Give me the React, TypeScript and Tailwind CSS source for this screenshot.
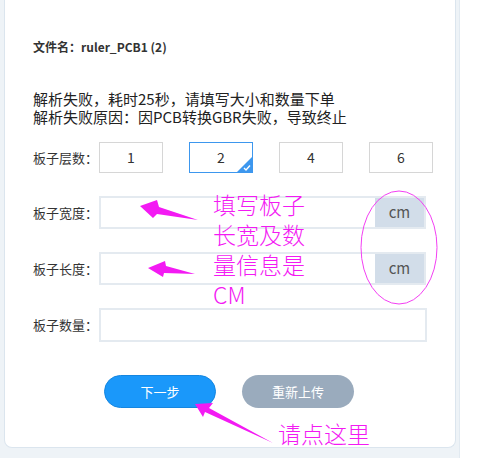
import React from "react"

const font = { fontFamily: '"Noto Sans CJK SC", "Noto Sans", sans-serif' }

function LayerBox({ value, selected }: { value: string; selected?: boolean }) {
  return (
    <div
      className={
        "relative flex h-[31px] w-[64px] items-center justify-center overflow-hidden text-[14px] text-[#333] " +
        (selected ? "border border-[#3d97ee]" : "border border-[#d6d6d6]")
      }
    >
      {value}
      {selected && (
        <svg className="absolute bottom-0 right-0" width="15" height="15" viewBox="0 0 15 15">
          <path d="M15 0 L15 15 L0 15 Z" fill="#3d97ee" />
          <path d="M7 11 L9 13 L13 8.5" stroke="#fff" strokeWidth="1.4" fill="none" />
        </svg>
      )}
    </div>
  )
}

function Row({ label, children }: { label: string; children: React.ReactNode }) {
  return (
    <div className="flex items-center">
      <div className="w-[66px] shrink-0 text-[13px] text-[#333]">{label}</div>
      {children}
    </div>
  )
}

function SizeInput() {
  return (
    <div className="flex h-[33px] w-[327px] border-2 border-[#e4eaf0]">
      <div className="flex-1 bg-white" />
      <div className="flex w-[49px] items-center justify-center bg-[#d2dde9] text-[15px] text-[#555]">cm</div>
    </div>
  )
}

export default function App() {
  return (
    <div className="h-[458px] w-[504px] bg-white" style={font}>
      <div className="w-[460px] border-r border-[#e2eaf1] bg-[#eef3f7] pb-[10px]">
        <div className="relative ml-1 w-[452px] rounded-b-[8px] border-x border-b border-[#dbe5ee] bg-white pb-[39px] pl-[28px] pt-[39px]">
          <div className="text-[12px] font-bold leading-[16px] text-[#333]">文件名：ruler_PCB1 (2)</div>

          <div className="mt-[35px] text-[15px] leading-[18px] text-[#222]">
            <div>解析失败，耗时25秒，请填写大小和数量下单</div>
            <div>解析失败原因：因PCB转换GBR失败，导致终止</div>
          </div>

          <div className="mt-[16px]">
            <Row label="板子层数：">
              <div className="flex gap-[26px]">
                <LayerBox value="1" />
                <LayerBox value="2" selected />
                <LayerBox value="4" />
                <LayerBox value="6" />
              </div>
            </Row>
          </div>

          <div className="mt-[23px]">
            <Row label="板子宽度：">
              <SizeInput />
            </Row>
          </div>

          <div className="mt-[23px]">
            <Row label="板子长度：">
              <SizeInput />
            </Row>
          </div>

          <div className="mt-[23px]">
            <Row label="板子数量：">
              <div className="h-[34px] w-[328px] border-2 border-[#e4eaf0] bg-white" />
            </Row>
          </div>

          <div className="mt-[33px] flex gap-[26px] pl-[71px]">
            <button className="h-[33px] w-[112px] rounded-full border border-[#1586e0] bg-[#1a98fa] text-[13px] text-white">
              下一步
            </button>
            <button className="h-[33px] w-[112px] rounded-full bg-[#9aabbd] text-[13px] text-white">
              重新上传
            </button>
          </div>

          {/* annotations drawn over the form */}
          <svg className="pointer-events-none absolute left-[-5px] top-0" width="460" height="458">
            <polygon points="140,206 157,200 159,207 198,220 157,214 153,218" fill="#f31af3" />
            <polygon points="148,268 165,261 166,266 195,274 164,273 163,277" fill="#f31af3" />
            <polygon points="195,404 213,403 209,408 273,443 205,412 203,417" fill="#f31af3" />
            <ellipse cx="399" cy="247.5" rx="38" ry="56.5" fill="none" stroke="#f33ff3" strokeWidth="1" />
          </svg>
          <div className="pointer-events-none absolute left-[208px] top-[189px] text-[23px] font-light leading-[30px] text-[#f31af3]">
            <div>填写板子</div>
            <div>长宽及数</div>
            <div>量信息是</div>
            <div>CM</div>
          </div>
          <div className="pointer-events-none absolute left-[273px] top-[418px] text-[23px] font-light leading-[30px] text-[#f31af3]">
            请点这里
          </div>
        </div>
      </div>
    </div>
  )
}
